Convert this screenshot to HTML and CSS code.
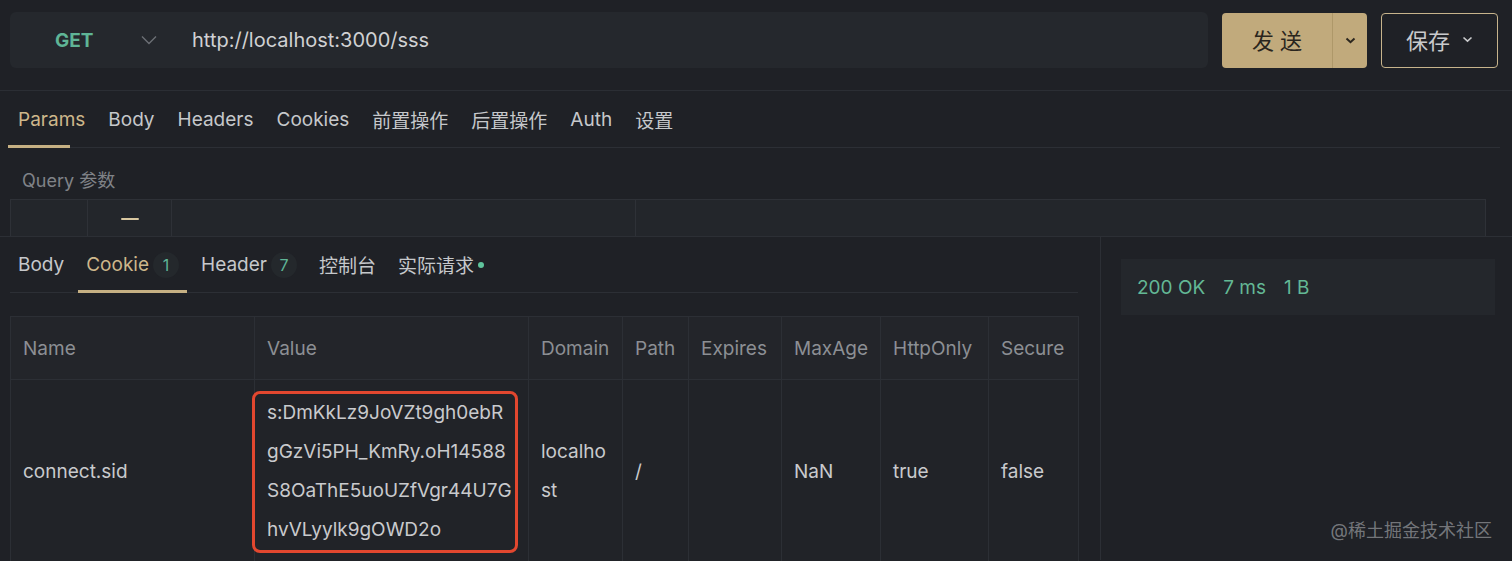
FILE: index.html
```html
<!DOCTYPE html>
<html lang="zh-CN">
<head>
  <meta charset="UTF-8" />
  <title>Cookie</title>
  <link rel="stylesheet" href="styles.css">
</head>
<body>

  <div class="request-bar">
    <div class="url-box">
      <span class="method">GET</span>
      <svg class="method-arrow" width="16" height="10" viewBox="0 0 16 10"><path d="M1 1.5 L8 8.5 L15 1.5" fill="none" stroke="#6c6f75" stroke-width="1.4"/></svg>
      <span class="url">http://localhost:3000/sss</span>
    </div>
    <div class="send-btn">
      <span class="send-label">发 送</span>
      <span class="send-more"><svg width="11" height="7" viewBox="0 0 11 7"><path d="M1.5 1.5 L5.5 5.2 L9.5 1.5" fill="none" stroke="#2b261e" stroke-width="2"/></svg></span>
    </div>
    <div class="save-btn">
      保存
      <svg width="11" height="7" viewBox="0 0 11 7"><path d="M1.5 1.5 L5.5 5.2 L9.5 1.5" fill="none" stroke="#c9cacc" stroke-width="1.6"/></svg>
    </div>
  </div>

  <div class="request-panel">
    <div class="tabs req-tabs">
      <span class="tab active">Params</span>
      <span class="tab">Body</span>
      <span class="tab">Headers</span>
      <span class="tab">Cookies</span>
      <span class="tab">前置操作</span>
      <span class="tab">后置操作</span>
      <span class="tab">Auth</span>
      <span class="tab">设置</span>
    </div>
    <div class="query-title">Query 参数</div>
    <div class="params-table">
      <div class="pcell pc-1"></div>
      <div class="pcell pc-2"><span class="check-mark"></span></div>
      <div class="pcell pc-3"></div>
      <div class="pcell pc-4"></div>
    </div>
  </div>

  <div class="response">
    <div class="response-main">
      <div class="tabs res-tabs">
        <span class="tab">Body</span>
        <span class="tab active">Cookie<span class="badge">1</span></span>
        <span class="tab">Header<span class="badge">7</span></span>
        <span class="tab">控制台</span>
        <span class="tab">实际请求<span class="dot"></span></span>
      </div>

      <table class="cookie-table">
        <colgroup>
          <col style="width: 244px">
          <col style="width: 274px">
          <col style="width: 94px">
          <col style="width: 66px">
          <col style="width: 93px">
          <col style="width: 99px">
          <col style="width: 108px">
          <col style="width: 90px">
        </colgroup>
        <thead>
          <tr>
            <th>Name</th>
            <th>Value</th>
            <th>Domain</th>
            <th>Path</th>
            <th>Expires</th>
            <th>MaxAge</th>
            <th>HttpOnly</th>
            <th>Secure</th>
          </tr>
        </thead>
        <tbody>
          <tr>
            <td>connect.sid</td>
            <td><div class="value-text">s:DmKkLz9JoVZt9gh0ebR<br>gGzVi5PH_KmRy.oH14588<br>S8OaThE5uoUZfVgr44U7G<br>hvVLyylk9gOWD2o</div></td>
            <td class="wrap">localhost</td>
            <td>/</td>
            <td></td>
            <td>NaN</td>
            <td>true</td>
            <td>false</td>
          </tr>
        </tbody>
      </table>
    </div>

    <div class="response-side">
      <div class="status-card">
        <span>200 OK</span>
        <span>7 ms</span>
        <span>1 B</span>
      </div>
    </div>

    <div class="watermark">@稀土掘金技术社区</div>
  </div>

</body>
</html>
```

FILE: styles.css
```css
body {
  margin: 0;
  height: 561px;
  overflow: hidden;
  background: #1f2126;
  color: #c9cacd;
  font-family: Inter, "Noto Sans CJK SC", sans-serif;
  font-size: 19px;
}

/* top bar */
.request-bar {
  display: flex;
  align-items: flex-start;
  height: 91px;
  padding: 12px 14px 0 10px;
  box-sizing: border-box;
  border-bottom: 1px solid #2b2e34;
}

.url-box {
  flex: 1;
  height: 56px;
  background: #25282d;
  border-radius: 6px;
  display: flex;
  align-items: center;
  padding-left: 45px;
}

.method {
  color: #5fb596;
  font-weight: 700;
  font-size: 19px;
  width: 38px;
}

.method-arrow {
  margin-left: 48px;
}

.url {
  margin-left: 35px;
  font-size: 20px;
  color: #d0d1d3;
}

.send-btn {
  display: flex;
  width: 145px;
  height: 55px;
  margin-top: 1px;
  margin-left: 14px;
  background: #c1aa7c;
  border-radius: 4px;
  color: #2a251d;
}

.send-label {
  flex: 1;
  display: flex;
  align-items: center;
  justify-content: center;
  padding-bottom: 3px;
  font-size: 22px;
}

.send-more {
  width: 34px;
  display: flex;
  align-items: center;
  justify-content: center;
  border-left: 1px solid #ae9869;
}

.save-btn {
  display: flex;
  align-items: center;
  justify-content: center;
  gap: 12px;
  width: 117px;
  height: 55px;
  margin-top: 1px;
  margin-left: 14px;
  padding-bottom: 3px;
  box-sizing: border-box;
  border: 1.5px solid #c7b48c;
  border-radius: 4px;
  font-size: 22px;
  color: #c9cacc;
}

/* tabs */
.tabs {
  display: flex;
  align-items: center;
  border-bottom: 1px solid #2c2f35;
}

.tab {
  position: relative;
  display: flex;
  align-items: center;
  height: 100%;
  color: #c6c8cb;
}

.tab.active {
  color: #cdb78b;
}

.req-tabs {
  height: 56px;
  margin: 0 12px 0 10px;
  gap: 23px;
  padding-left: 8px;
}

.req-tabs .tab.active::after {
  content: "";
  position: absolute;
  left: -10px;
  bottom: -1px;
  width: 62px;
  height: 3px;
  background: #c6b083;
}

.request-panel {
  height: 145px;
  overflow: hidden;
  border-bottom: 1px solid #2c2f35;
}

.query-title {
  margin: 18px 0 0 22px;
  color: #808388;
  font-size: 18px;
}

.params-table {
  display: flex;
  height: 60px;
  margin: 7px 26px 0 10px;
  border: 1px solid #2e3137;
  background: #23262b;
}

.pcell {
  border-right: 1px solid #2e3137;
  position: relative;
}

.pc-1 { width: 76px; }
.pc-2 { width: 83px; }
.pc-3 { width: 463px; }
.pc-4 { flex: 1; border-right: none; }

.check-mark {
  position: absolute;
  left: 33px;
  top: 18px;
  width: 18px;
  height: 2px;
  border-radius: 1px;
  background: #d8c7a0;
}

/* response */
.response {
  position: relative;
  display: flex;
  height: 323px;
}

.response-main {
  width: 1068px;
  padding: 0 22px 0 10px;
  border-right: 1px solid #2c2f35;
}

.res-tabs {
  height: 55px;
  gap: 6px;
}

.res-tabs .tab {
  padding: 0 8px;
}

.res-tabs .tab.active::after {
  content: "";
  position: absolute;
  left: 0;
  right: 0;
  bottom: -1px;
  height: 3px;
  background: #c6b083;
}

.badge {
  display: inline-flex;
  align-items: center;
  justify-content: center;
  width: 26px;
  height: 26px;
  margin-left: 4px;
  border-radius: 50%;
  background: #24282c;
  color: #5fb596;
  font-size: 16px;
}

.dot {
  width: 6px;
  height: 6px;
  margin-left: 4px;
  border-radius: 50%;
  background: #5fc49c;
}

.cookie-table {
  margin-top: 23px;
  width: 1068px;
  table-layout: fixed;
  border-collapse: collapse;
  background: #212328;
}

.cookie-table th,
.cookie-table td {
  border: 1px solid #2c2f35;
  padding: 0 12px;
  text-align: left;
  font-weight: 400;
}

.cookie-table th {
  height: 62px;
  color: #8c8f94;
  background: #23252a;
}

.cookie-table td {
  height: 182px;
  line-height: 39px;
  color: #c9cacd;
}

.cookie-table td.wrap {
  word-break: break-all;
}

.value-text {
  position: relative;
  white-space: nowrap;
}

.value-text::after {
  content: "";
  position: absolute;
  left: -15px;
  right: -2px;
  top: -2px;
  bottom: -4px;
  border: 3px solid #e2472f;
  border-radius: 8px;
}

.response-side {
  flex: 1;
  padding: 22px 17px 0 20px;
}

.status-card {
  display: flex;
  align-items: center;
  gap: 18px;
  height: 56px;
  padding-left: 16px;
  background: #24272c;
  color: #63b895;
  font-size: 19px;
}

.watermark {
  position: absolute;
  right: 20px;
  bottom: 18px;
  font-size: 18px;
  color: rgba(190, 192, 196, 0.55);
}
```
